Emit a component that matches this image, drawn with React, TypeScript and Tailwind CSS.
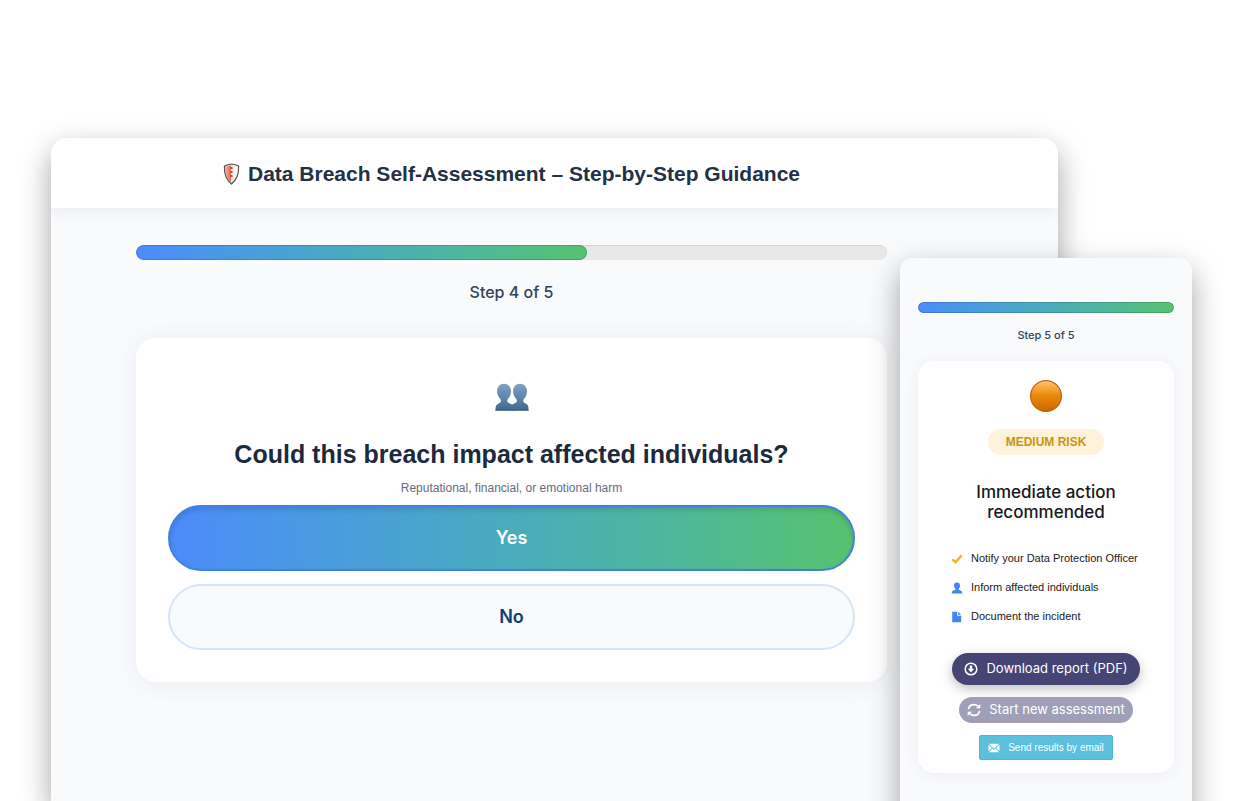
import { useState } from "react";

/**
 * Props for ProgressBar component
 */
interface ProgressBarProps {
  step: number;
  total: number;
  percent: number;
  compact?: boolean;
}

const ANSWERS = ["Yes", "No"];

// ---------------- ICONS ----------------

function ShieldIcon() {
  return (
    <svg viewBox="0 0 17 22" className="h-[22px] w-[17px] shrink-0" aria-hidden="true">
      <defs>
        <linearGradient id="shieldSteel" x1="0" y1="0" x2="1" y2="0">
          <stop offset="0" stopColor="#c9cccd" />
          <stop offset="1" stopColor="#ffffff" />
        </linearGradient>
        <linearGradient id="shieldRed" x1="0" y1="0" x2="1" y2="0">
          <stop offset="0" stopColor="#f8ab9b" />
          <stop offset="1" stopColor="#e4614c" />
        </linearGradient>
      </defs>
      <path
        d="M8.5 1C6 1.2 3.6 1.8 1.4 3c-.3 7.200 1.200 13.400 7.100 18 5.900-4.600 7.400-10.800 7.100-18C13.400 1.800 11 1.200 8.500 1Z"
        fill="url(#shieldSteel)"
        stroke="#5a5350"
        strokeWidth="1.200"
      />
      <path
        d="M8 2.500C6 2.700 4.200 3.100 2.700 3.900 2.600 10 3.900 15 8 18.800Z"
        fill="url(#shieldRed)"
      />
      <path d="M7.500 4h2v2h-2zM7.500 8h2v2h-2zM7.500 12h2v2h-2z" fill="#d8452f" />
    </svg>
  );
}

function PeopleIcon() {
  return (
    <svg viewBox="0 0 34 28" className="h-7 w-[34px]" aria-hidden="true">
      <defs>
        <linearGradient id="peopleFill" x1="0" y1="0" x2="0" y2="1">
          <stop offset="0" stopColor="#7fa3c4" />
          <stop offset="0.600" stopColor="#5781a8" />
          <stop offset="1" stopColor="#42678d" />
        </linearGradient>
      </defs>
      <g fill="url(#peopleFill)">
        <path d="M25 .8c4.200 0 7 3 7 7.400 0 3-1.300 6-3.200 7.900-.6.700-.7 2-.3 2.800.8 1.400 4.300 1.600 4.800 4.600.2 1.300.2 2.600.2 4H15.500c0-1.400 0-2.700.3-4 .7-2.800 5-3.200 5.800-4.600.4-.8.300-2.100-.3-2.800-1.900-1.900-3.200-4.900-3.200-7.900C18.100 3.800 20.800.8 25 .8Z" />
        <path d="M9 .8c4.200 0 7 3 7 7.400 0 3-1.300 6-3.200 7.900-.6.700-.7 2-.3 2.800.8 1.400 5.100 1.800 6.400 4.600.4 1.300.4 2.600.4 4H.5c0-1.400 0-2.700.3-4 .7-2.900 4.100-3.200 4.900-4.600.4-.8.300-2.100-.3-2.800C3.400 14.200 2.100 11.200 2.100 8.200 2.100 3.800 4.800.8 9 .8Z" />
      </g>
      <path d="M.5 27.100h33" stroke="#35597e" />
    </svg>
  );
}

function OrangeCircleIcon() {
  return (
    <svg viewBox="0 0 34 34" className="size-[34px]" aria-hidden="true">
      <defs>
        <linearGradient id="orangeFill" x1="0" y1="0" x2="0" y2="1">
          <stop offset="0" stopColor="#fdc774" />
          <stop offset="0.300" stopColor="#f3a032" />
          <stop offset="0.480" stopColor="#e98a08" />
          <stop offset="1" stopColor="#cd6500" />
        </linearGradient>
      </defs>
      <circle cx="17" cy="17" r="15.400" fill="url(#orangeFill)" stroke="#bd6412" strokeWidth="1.200" />
    </svg>
  );
}

function CheckIcon() {
  return (
    <svg viewBox="0 0 12 12" className="size-3 shrink-0" aria-hidden="true">
      <path d="M.4 7.300 2.200 5.500 4.400 7.500 9.700 1.500 11.600 3.100 4.600 10.900Z" fill="#f9b127" />
    </svg>
  );
}

function UserIcon() {
  return (
    <svg viewBox="0 0 12 12" className="size-3 shrink-0" aria-hidden="true">
      <path
        d="M6 .5c1.900 0 3 1.300 3 3.100 0 1.300-.5 2.400-1.300 3.200v1c.9.700 2.900.9 3.300 2 .2.500.2 1.100.2 1.700H.8c0-.6 0-1.200.2-1.700.4-1.100 2.400-1.300 3.300-2v-1C3.500 6 3 4.900 3 3.600 3 1.800 4.100.5 6 .5Z"
        fill="#4285f4"
      />
    </svg>
  );
}

function FileIcon() {
  return (
    <svg viewBox="0 0 12 12" className="size-3 shrink-0" aria-hidden="true">
      <path d="M1.200.7h5v4.100h4v6.500h-9z" fill="#4285f4" />
      <path d="M7.200.7l3 3.100h-3z" fill="#4285f4" />
    </svg>
  );
}

function DownloadIcon() {
  return (
    <svg viewBox="0 0 14 14" className="size-3.5 shrink-0" aria-hidden="true">
      <circle cx="7" cy="7" r="5.800" fill="none" stroke="#fff" strokeWidth="1.500" />
      <path d="M5.800 3.500h2.400v3.200h2L7 10.400 3.800 6.700h2z" fill="#fff" />
    </svg>
  );
}

function RefreshIcon() {
  return (
    <svg viewBox="0 0 14 14" className="size-3.5 shrink-0" aria-hidden="true">
      <path
        d="M1.500 6.200C1.900 3.300 4.200 1.600 7 1.600c1.600 0 2.900.6 4 1.600M12.500 7.800c-.4 2.900-2.700 4.600-5.500 4.600-1.600 0-2.900-.6-4-1.600"
        fill="none"
        stroke="#fff"
        strokeWidth="1.700"
      />
      <path d="M13.300.9v4.400H8.900zM.7 13.100V8.700h4.400z" fill="#fff" />
    </svg>
  );
}

function EnvelopeIcon() {
  return (
    <svg viewBox="0 0 12 10" className="h-2.5 w-3 shrink-0" aria-hidden="true">
      <path d="M.8.8h10.400L6 5.600zM.5 1.700 4 5 .5 8.100zM11.500 1.700V8.100L8 5zM4.700 5.600 6 6.800l1.300-1.200 3.800 3.600H.9z" fill="#fff" />
    </svg>
  );
}

const ACTIONS = [
  { label: "Notify your Data Protection Officer", Icon: CheckIcon },
  { label: "Inform affected individuals", Icon: UserIcon },
  { label: "Document the incident", Icon: FileIcon },
];

/**
 * @component ProgressBar
 * @desc Gradient bar with the step label centred below it
 */
function ProgressBar({ step, total, percent, compact }: ProgressBarProps) {
  return (
    <div className="text-center">
      <div
        role="progressbar"
        aria-valuenow={percent}
        aria-label="Assessment progress"
        className={`overflow-hidden rounded-full bg-[#e8e8e8] shadow-[inset_0_1px_1px_rgba(0,0,0,0.08)] ${compact ? "h-[11px]" : "h-[15px]"}`}
      >
        <div
          className="h-full rounded-full border border-black/15 bg-linear-to-r from-[#4d8bfb] to-[#57c26e] bg-origin-border"
          style={{ width: `${percent}%` }}
        />
      </div>
      <p
        className={`font-[Inter,sans-serif] font-medium text-[#36425a] ${compact ? "mt-3 text-[11px] leading-5" : "mt-5 text-base leading-6"}`}
      >
        Step {step} of {total}
      </p>
    </div>
  );
}

/**
 * @component QuestionWindow
 * @desc Desktop window with the current question and its two answers
 */
function QuestionWindow() {
  const [answer, setAnswer] = useState("Yes");

  return (
    <main className="ml-[51px] mr-[188px] min-h-[663px] overflow-hidden rounded-t-2xl bg-[#f9fafc] shadow-[0_12px_30px_rgba(0,0,0,0.36)]">
      <header className="flex h-[70px] items-center justify-center gap-2 bg-white pt-0.5 pr-[171px] pl-[85px] shadow-[0_2px_14px_rgba(40,40,80,0.08)]">
        <ShieldIcon />
        <h1 className="text-[21px] leading-7 font-bold text-[#243044]">
          Data Breach Self-Assessment – Step-by-Step Guidance
        </h1>
      </header>

      <div className="pt-[37px] pr-[171px] pl-[85px]">
        <ProgressBar step={4} total={5} percent={60} />

        <section className="mt-[34px] flex flex-col items-center rounded-[20px] bg-white px-8 pt-[45px] pb-8 shadow-[0_2px_24px_rgba(60,60,120,0.07)]">
          <PeopleIcon />
          <h2 className="mt-[27px] text-center text-[25px] leading-8 font-bold text-[#1b2a3f]">
            Could this breach impact affected individuals?
          </h2>
          <p className="mt-[9px] text-xs leading-[18px] text-[#666c7e]">
            Reputational, financial, or emotional harm
          </p>

          {/* ANSWERS */}
          <div className="mt-2 flex w-full flex-col gap-[13px]">
            {ANSWERS.map((option) => (
              <button
                key={option}
                type="button"
                aria-pressed={answer === option}
                onClick={() => setAnswer(option)}
                className={`h-[66px] rounded-full border-2 font-[Inter,sans-serif] text-lg font-semibold ${
                  answer === option
                    ? "border-[#4080e4] bg-linear-to-r from-[#4d8bfb] to-[#57c26e] text-white shadow-[inset_0_3px_5px_rgba(0,0,0,0.13)]"
                    : "border-[#d6e4f9] bg-[#f9fafc] text-[#123a78]"
                }`}
              >
                {option}
              </button>
            ))}
          </div>
        </section>
      </div>
    </main>
  );
}

/**
 * @component ResultPanel
 * @desc Narrow panel with the risk level and the recommended actions
 */
function ResultPanel() {
  return (
    <aside className="absolute top-[258px] right-[54px] min-h-[600px] w-[292px] rounded-t-xl bg-[#f9fafc] px-[18px] pt-11 shadow-[0_12px_30px_rgba(0,0,0,0.36)]">
      <ProgressBar step={5} total={5} percent={100} compact />

      <section className="mt-4 flex flex-col items-center rounded-2xl bg-white pt-[18px] pb-[13px] shadow-[0_2px_16px_rgba(60,60,120,0.06)]">
        <OrangeCircleIcon />
        <span className="mt-4 rounded-full bg-[#fef2da] px-[18px] text-xs leading-[26px] font-bold text-[#c8960c]">
          MEDIUM RISK
        </span>
        <h2 className="mt-[27px] w-44 text-center font-[Inter,sans-serif] text-[17px] leading-5 font-medium text-[#17181c]">
          Immediate action recommended
        </h2>

        <ul className="mt-[22px] flex w-[190px] flex-col">
          {ACTIONS.map(({ label, Icon }) => (
            <li key={label} className="flex h-[29px] items-center gap-2 text-[11px] whitespace-nowrap text-[#1a1a1a]">
              <Icon />
              {label}
            </li>
          ))}
        </ul>

        {/* REPORT BUTTONS */}
        <button
          type="button"
          className="mt-[22px] flex h-8 items-center gap-2 rounded-full bg-[#454474] px-3 font-[Inter,sans-serif] text-[13px] text-white shadow-[0_4px_12px_rgba(0,0,0,0.25)]"
        >
          <DownloadIcon />
          Download report (PDF)
        </button>
        <button
          type="button"
          className="mt-3 flex h-[26px] items-center gap-2 rounded-full bg-[#a09fb8] px-2 font-[Inter,sans-serif] text-[13px] text-white"
        >
          <RefreshIcon />
          Start new assessment
        </button>
        <button
          type="button"
          className="mt-3 flex h-[25px] items-center gap-2 rounded-xs border border-[#4cb5d5] bg-[#5bc0de] px-2 text-[10px] text-white"
        >
          <EnvelopeIcon />
          Send results by email
        </button>
      </section>
    </aside>
  );
}

export default function App() {
  return (
    <div className="relative h-screen overflow-hidden bg-white pt-[138px] font-['Liberation_Sans',Arial,sans-serif]">
      <QuestionWindow />
      <ResultPanel />
    </div>
  );
}
